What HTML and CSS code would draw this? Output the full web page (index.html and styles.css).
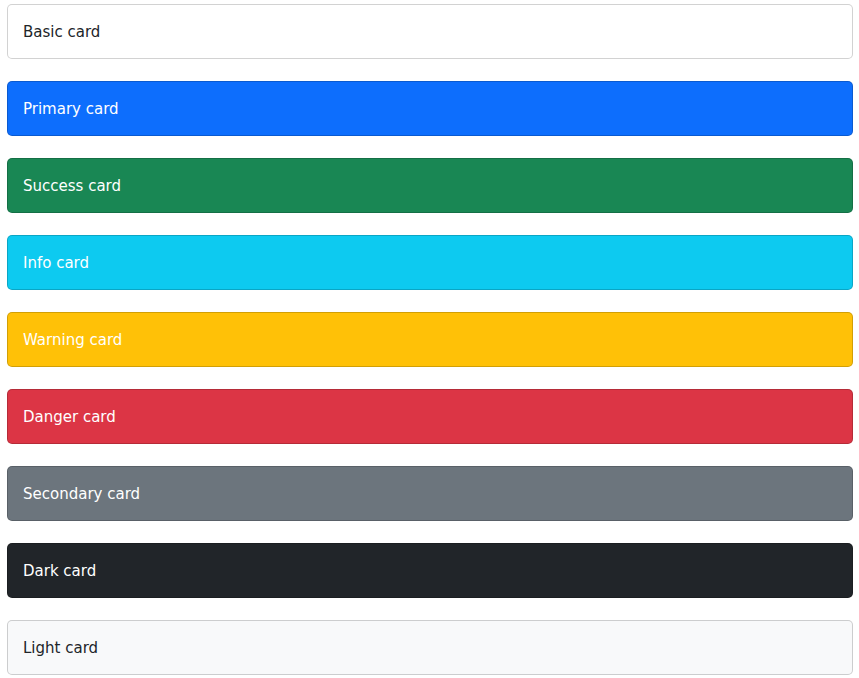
FILE: index.html
```html
<!DOCTYPE html>
<html>
<head>
<meta charset="utf-8">
<link rel="stylesheet" href="styles.css">
</head>
<body>
<div class="stack">
  <div class="card"><div class="card-body">Basic card</div></div>
  <div class="card primary"><div class="card-body">Primary card</div></div>
  <div class="card success"><div class="card-body">Success card</div></div>
  <div class="card info"><div class="card-body">Info card</div></div>
  <div class="card warning"><div class="card-body">Warning card</div></div>
  <div class="card danger"><div class="card-body">Danger card</div></div>
  <div class="card secondary"><div class="card-body">Secondary card</div></div>
  <div class="card dark"><div class="card-body">Dark card</div></div>
  <div class="card light"><div class="card-body">Light card</div></div>
</div>
</body>
</html>
```
FILE: styles.css
```css
html, body {
  margin: 0;
  padding: 0;
  background: #fff;
}
body {
  font-family: "DejaVu Sans", Verdana, sans-serif;
  font-size: 15px;
  line-height: 21px;
  color: #212529;
}
.stack {
  display: flex;
  flex-direction: column;
  gap: 22px;
  padding: 4px 6px 0 7px;
}
.card {
  border: 1px solid rgba(0, 0, 0, 0.175);
  border-radius: 5px;
  background: #fff;
}
.card-body {
  padding: 17px 15px 15px;
}
.primary { background: #0d6efd; color: #fff; }
.success { background: #198754; color: #fff; }
.info { background: #0dcaf0; color: #fff; }
.warning { background: #ffc107; color: #fff; }
.danger { background: #dc3545; color: #fff; }
.secondary { background: #6c757d; color: #fff; }
.dark { background: #212529; color: #fff; }
.light { background: #f8f9fa; color: #212529; }
```
